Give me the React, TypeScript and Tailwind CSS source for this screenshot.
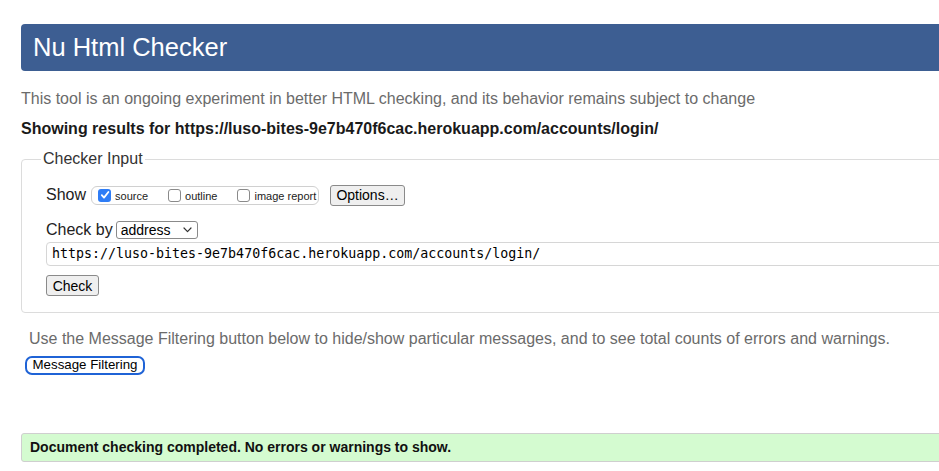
import React from "react";

function Box({ checked, label }: { checked?: boolean; label: string }) {
  return (
    <span className="flex items-center">
      {checked ? (
        <span className="w-[13px] h-[13px] rounded-[3px] bg-[#2f7df6] flex items-center justify-center">
          <svg width="10" height="10" viewBox="0 0 10 10" fill="none">
            <path d="M1.8 5.2 L4 7.6 L8.4 2" stroke="white" strokeWidth="1.8" strokeLinecap="round" strokeLinejoin="round" />
          </svg>
        </span>
      ) : (
        <span className="w-[13px] h-[13px] rounded-[3px] border border-[#8a8a8a] bg-white" />
      )}
      <span className="ml-[4px] text-[11px] leading-none text-[#222] pt-[2px]">{label}</span>
    </span>
  );
}

export default function App(): React.ReactElement {
  const url = "https://luso-bites-9e7b470f6cac.herokuapp.com/accounts/login/";

  return (
    <div className="h-[471px] w-full overflow-hidden bg-white font-['Liberation_Sans',Arial,sans-serif] text-[#222]">
      <div className="w-[1200px] pl-[21px] pt-[24px]">
        {/* title bar */}
        <div className="h-[47px] rounded-[4px] bg-[#3d5e92] flex items-center pl-[12px]">
          <h1 className="text-[25.5px] leading-none text-white">Nu Html Checker</h1>
        </div>

        <p className="mt-[18px] text-[16px] leading-[20px] text-[#6b6b6b]">
          This tool is an ongoing experiment in better HTML checking, and its behavior remains subject to change
        </p>
        <p className="mt-[10px] text-[16px] leading-[20px] font-bold text-[#1a1a1a]">Showing results for {url}</p>

        {/* checker input */}
        <fieldset className="mt-[11px] border border-[#dcdcdc] rounded-[4px] pl-[24px] pt-[16px] pb-[14px]">
          <legend className="ml-[-5px] px-[2px] text-[16px] leading-[18px] text-[#333]">Checker Input</legend>

          <div className="flex items-center h-[22px]">
            <span className="text-[16px] text-[#222]">Show</span>
            <div className="ml-[5px] h-[19px] w-[228px] border border-[#d0d0d0] rounded-[6px] flex items-center pl-[6px] gap-[20px]">
              <Box checked label="source" />
              <Box label="outline" />
              <Box label="image report" />
            </div>
            <button
              type="button"
              className="ml-[11px] h-[21px] w-[75px] border border-[#8a8a8a] rounded-[3px] bg-[#efefef] text-[14px] leading-none text-black"
            >
              Options…
            </button>
          </div>

          <div className="mt-[14px] flex items-center h-[20px]">
            <span className="text-[16px] text-[#222]">Check by</span>
            <div className="ml-[3px] h-[18px] w-[82px] border border-[#8a8a8a] rounded-[3px] bg-white flex items-center justify-between pl-[4px] pr-[5px]">
              <span className="text-[14px] leading-none text-black">address</span>
              <svg width="9" height="6" viewBox="0 0 9 6" fill="none">
                <path d="M1 1 L4.5 4.6 L8 1" stroke="#333" strokeWidth="1.2" strokeLinecap="round" strokeLinejoin="round" />
              </svg>
            </div>
          </div>

          <div className="mt-[2px] h-[24px] border border-[#d6d6d6] rounded-[4px] flex items-center pl-[5px]">
            <span className="font-['DejaVu_Sans_Mono',monospace] text-[13.3px] leading-none text-black">{url}</span>
          </div>

          <button
            type="button"
            className="mt-[9px] h-[21px] w-[53px] border border-[#8a8a8a] rounded-[3px] bg-[#efefef] text-[14px] leading-none text-black"
          >
            Check
          </button>
        </fieldset>

        <p className="mt-[16px] ml-[8px] text-[16px] leading-[20px] text-[#6b6b6b]">
          Use the Message Filtering button below to hide/show particular messages, and to see total counts of errors and warnings.
        </p>
        <button
          type="button"
          className="mt-[7px] ml-[4px] h-[19px] w-[120px] border-2 border-[#1f63d6] rounded-[7px] bg-white text-[13.3px] leading-none text-black"
        >
          Message Filtering
        </button>

        <div className="mt-[57px] h-[29px] border border-[#cfcfcf] rounded-[3px] bg-[#d4fbd0] flex items-center pl-[8px]">
          <span className="text-[14px] font-bold text-[#111]">Document checking completed. No errors or warnings to show.</span>
        </div>
      </div>
    </div>
  );
}
